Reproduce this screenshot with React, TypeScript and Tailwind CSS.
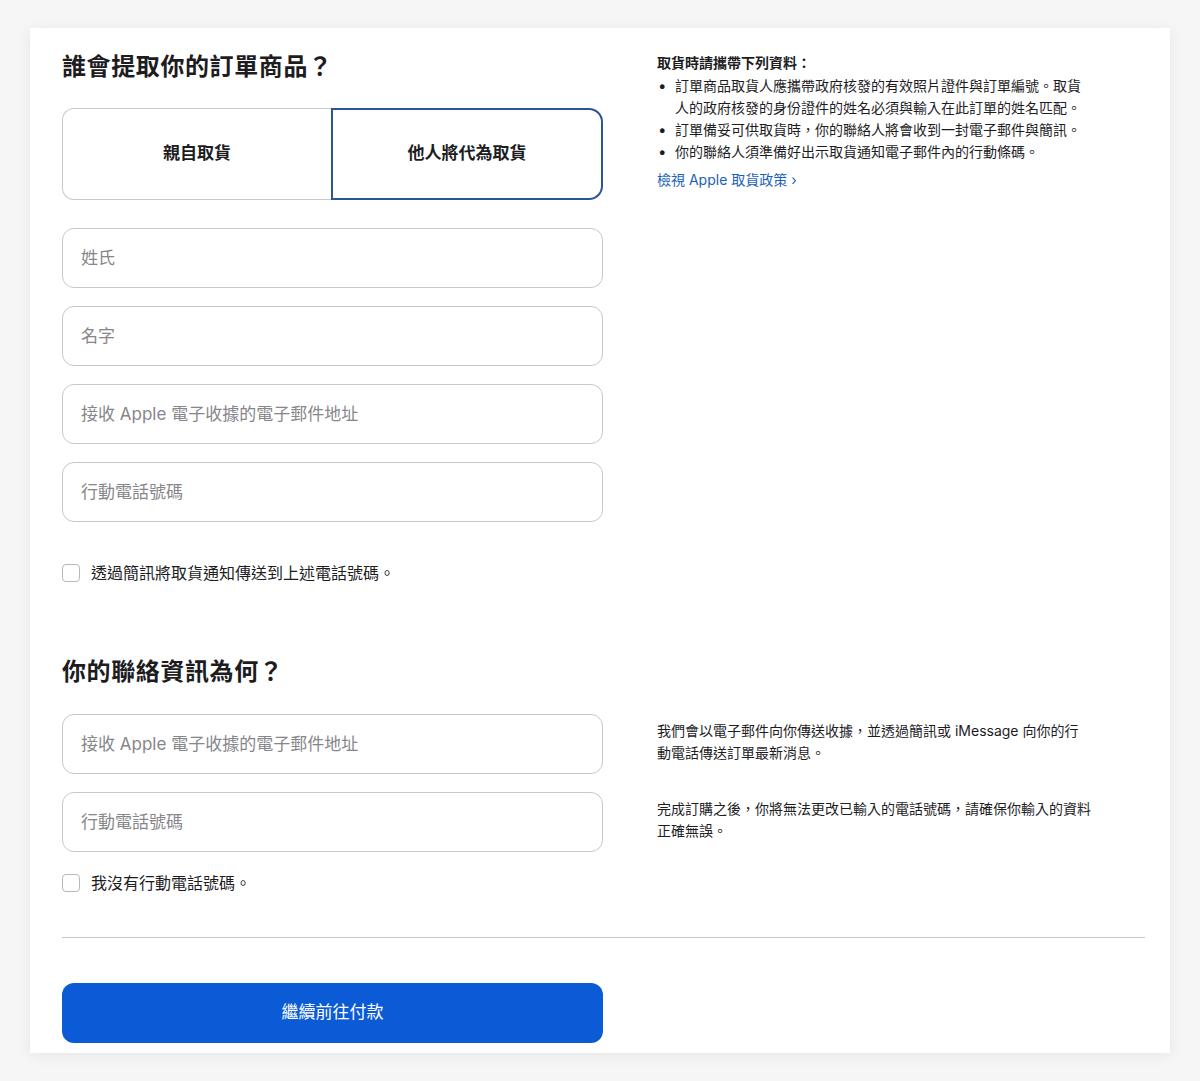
const font = { fontFamily: 'Inter, "Noto Sans CJK TC", "Noto Sans", sans-serif' };

const Field = ({ placeholder }: { placeholder: string }) => (
  <input
    type="text"
    placeholder={placeholder}
    className="h-[60px] w-full rounded-[12px] border border-[#c8c8cc] bg-white px-[18px] text-[17px] text-[#1d1d1f] outline-none placeholder:text-[#86868b]"
  />
);

const Check = ({ label }: { label: string }) => (
  <label className="flex items-center gap-[11px] text-[16px] leading-[22px] text-[#1d1d1f]">
    <span className="h-[18px] w-[18px] rounded-[4px] border border-[#b8b8bc] bg-white" />
    {label}
  </label>
);

const Bullet = ({ children }: { children: React.ReactNode }) => (
  <li className="flex">
    <span className="w-[18px] shrink-0 pl-[1px] text-[15px]">•</span>
    <span>{children}</span>
  </li>
);

const App = () => {
  return (
    <div className="min-h-screen bg-[#f6f6f6] pt-[28px]" style={font}>
      <div className="mx-[30px] w-[1140px] bg-white pb-[10px] pl-[32px] pr-[25px] pt-[23px] shadow-[0_2px_14px_rgba(0,0,0,0.07)]">
        {/* pickup section */}
        <div className="grid grid-cols-[541px_1fr] gap-x-[54px]">
          <div>
            <h2 className="text-[24px] font-semibold leading-[32px] tracking-[0.6px] text-[#1d1d1f]">誰會提取你的訂單商品？</h2>
            <div className="mt-[25px] flex h-[92px]">
              <button className="flex-1 rounded-l-[12px] border border-r-0 border-[#c8c8cc] text-[17px] font-semibold text-[#1d1d1f]">
                親自取貨
              </button>
              <button className="flex-1 rounded-r-[14px] border-2 border-[#2c5598] text-[17px] font-semibold text-[#1d1d1f]">
                他人將代為取貨
              </button>
            </div>
            <div className="mt-[28px] flex flex-col gap-[18px]">
              <Field placeholder="姓氏" />
              <Field placeholder="名字" />
              <Field placeholder="接收 Apple 電子收據的電子郵件地址" />
              <Field placeholder="行動電話號碼" />
            </div>
            <div className="mt-[40px]">
              <Check label="透過簡訊將取貨通知傳送到上述電話號碼。" />
            </div>
          </div>

          <div className="pt-[1px] text-[14px] leading-[22px] text-[#1d1d1f]">
            <p className="font-semibold">取貨時請攜帶下列資料：</p>
            <ul className="mt-[1px] w-[432px]">
              <Bullet>訂單商品取貨人應攜帶政府核發的有效照片證件與訂單編號。取貨人的政府核發的身份證件的姓名必須與輸入在此訂單的姓名匹配。</Bullet>
              <Bullet>訂單備妥可供取貨時，你的聯絡人將會收到一封電子郵件與簡訊。</Bullet>
              <Bullet>你的聯絡人須準備好出示取貨通知電子郵件內的行動條碼。</Bullet>
            </ul>
            <a href="#" className="mt-[6px] inline-block text-[14px] text-[#1a62b8]">
              檢視 Apple 取貨政策 ›
            </a>
          </div>
        </div>

        {/* contact section */}
        <h2 className="mt-[72px] text-[24px] font-semibold leading-[32px] tracking-[0.6px] text-[#1d1d1f]">你的聯絡資訊為何？</h2>
        <div className="mt-[26px] grid grid-cols-[541px_1fr] gap-x-[54px]">
          <div>
            <div className="flex flex-col gap-[18px]">
              <Field placeholder="接收 Apple 電子收據的電子郵件地址" />
              <Field placeholder="行動電話號碼" />
            </div>
            <div className="mt-[20px]">
              <Check label="我沒有行動電話號碼。" />
            </div>
          </div>
          <div className="w-[440px] pt-[6px] text-[14px] leading-[22px] text-[#1d1d1f]">
            <p>
              我們會以電子郵件向你傳送收據，並透過簡訊或 iMessage 向你的行
              <br />
              動電話傳送訂單最新消息。
            </p>
            <p className="mt-[34px]">完成訂購之後，你將無法更改已輸入的電話號碼，請確保你輸入的資料正確無誤。</p>
          </div>
        </div>

        <div className="mt-[43px] h-px bg-[#c8c8cc]" />

        <button className="mt-[45px] h-[60px] w-[541px] rounded-[12px] bg-[#0b5bd6] text-[17px] text-white">
          繼續前往付款
        </button>
      </div>
    </div>
  );
};

export default App;
